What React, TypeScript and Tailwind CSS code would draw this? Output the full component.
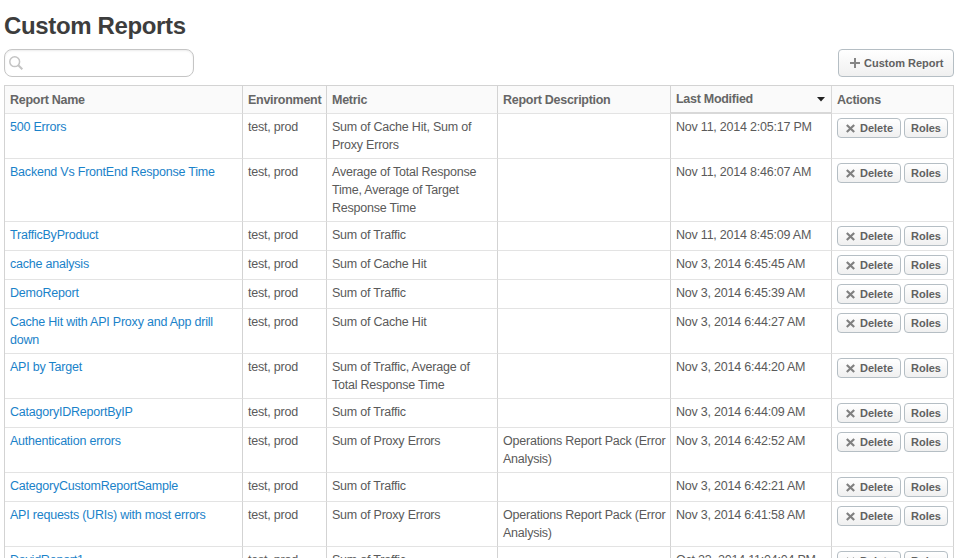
import type { ReactNode } from 'react';

type Report = { name: string[]; metric: string[]; desc?: string[]; date: string };

const reports: Report[] = [
  { name: ['500 Errors'], metric: ['Sum of Cache Hit, Sum of', 'Proxy Errors'], date: 'Nov 11, 2014 2:05:17 PM' },
  { name: ['Backend Vs FrontEnd Response Time'], metric: ['Average of Total Response', 'Time, Average of Target', 'Response Time'], date: 'Nov 11, 2014 8:46:07 AM' },
  { name: ['TrafficByProduct'], metric: ['Sum of Traffic'], date: 'Nov 11, 2014 8:45:09 AM' },
  { name: ['cache analysis'], metric: ['Sum of Cache Hit'], date: 'Nov 3, 2014 6:45:45 AM' },
  { name: ['DemoReport'], metric: ['Sum of Traffic'], date: 'Nov 3, 2014 6:45:39 AM' },
  { name: ['Cache Hit with API Proxy and App drill', 'down'], metric: ['Sum of Cache Hit'], date: 'Nov 3, 2014 6:44:27 AM' },
  { name: ['API by Target'], metric: ['Sum of Traffic, Average of', 'Total Response Time'], date: 'Nov 3, 2014 6:44:20 AM' },
  { name: ['CatagoryIDReportByIP'], metric: ['Sum of Traffic'], date: 'Nov 3, 2014 6:44:09 AM' },
  { name: ['Authentication errors'], metric: ['Sum of Proxy Errors'], desc: ['Operations Report Pack (Error', 'Analysis)'], date: 'Nov 3, 2014 6:42:52 AM' },
  { name: ['CategoryCustomReportSample'], metric: ['Sum of Traffic'], date: 'Nov 3, 2014 6:42:21 AM' },
  { name: ['API requests (URIs) with most errors'], metric: ['Sum of Proxy Errors'], desc: ['Operations Report Pack (Error', 'Analysis)'], date: 'Nov 3, 2014 6:41:58 AM' },
  { name: ['DavidReport1'], metric: ['Sum of Traffic'], date: 'Oct 23, 2014 11:04:04 PM' },
];

const columns = 'grid grid-cols-[238px_84px_171px_173px_161px_122px]';

function Lines({ lines }: { lines: string[] }) {
  return (
    <>
      {lines.map((line) => (
        <div key={line}>{line}</div>
      ))}
    </>
  );
}

function Cell({ children, className = '' }: { children?: ReactNode; className?: string }) {
  return (
    <div className={`whitespace-nowrap border-r border-b border-r-[#d3d3d3] border-b-[#e3e3e3] py-1 pl-[5px] ${className}`}>
      {children}
    </div>
  );
}

function HeadCell({ children }: { children: ReactNode }) {
  return (
    <div className="h-7 whitespace-nowrap border-r border-b border-r-[#d3d3d3] border-b-[#e3e3e3] pt-[5px] pl-[5px]">
      {children}
    </div>
  );
}

const button =
  'flex items-center rounded-[4px] border border-[#b5bec4] bg-linear-to-b from-white to-[#f0f0f0] text-[11px] font-bold tracking-normal whitespace-nowrap text-[#616161]';

function Row({ report }: { report: Report }) {
  return (
    <div className={columns}>
      <Cell className="text-[#1a82c9]">
        <Lines lines={report.name} />
      </Cell>
      <Cell>test, prod</Cell>
      <Cell>
        <Lines lines={report.metric} />
      </Cell>
      <Cell>{report.desc && <Lines lines={report.desc} />}</Cell>
      <Cell>{report.date}</Cell>
      <Cell>
        <div className="flex gap-[3px]">
          <button className={`${button} h-5 w-16 pl-2`}>
            <svg className="mr-[5px] size-[9px]" viewBox="0 0 9 9" stroke="#808080" strokeWidth="2.2">
              <path d="M0.8 1L8.2 8M8.2 1L0.8 8" />
            </svg>
            Delete
          </button>
          <button className={`${button} h-5 w-11 justify-center`}>Roles</button>
        </div>
      </Cell>
    </div>
  );
}

export default function App() {
  return (
    <main className="h-[558px] w-[957px] overflow-hidden bg-white pl-1 font-['Liberation_Sans',Arial,sans-serif] text-[12.5px] leading-[18px] tracking-[-0.22px] text-[#5a5a5a]">
      <h1 className="pt-[10px] text-[24px] leading-[32px] font-bold tracking-[-0.36px] whitespace-nowrap text-[#3d3d3d]">Custom Reports</h1>
      <div className="mt-[7px] flex w-[950px] justify-between">
        <div className="flex h-7 w-[190px] items-center rounded-lg border border-[#c5c5c5] pl-1 shadow-[inset_0_1px_2px_rgba(0,0,0,0.08)]">
          <svg className="size-[14px]" viewBox="0 0 14 14" fill="none" stroke="#c4c4c4">
            <circle cx="5.7" cy="5.7" r="4.9" strokeWidth="1.5" />
            <path d="M9.3 9.3L13.3 13.3" strokeWidth="2" />
          </svg>
        </div>
        <button className={`${button} h-7 w-[116px] pl-[11px]`}>
          <svg className="mr-[3px] size-[11px]" viewBox="0 0 11 11" stroke="#858585" strokeWidth="2">
            <path d="M5 0V10M0 5H10" />
          </svg>
          Custom Report
        </button>
      </div>
      <div className="mt-2 w-[950px] border-t border-l border-[#d3d3d3]">
        <div className={`${columns} bg-[#fafafa] font-bold tracking-[-0.28px] text-[#666]`}>
          <HeadCell>Report Name</HeadCell>
          <HeadCell>Environment</HeadCell>
          <HeadCell>Metric</HeadCell>
          <HeadCell>Report Description</HeadCell>
          <div className="flex h-7 justify-between border-r border-b-2 border-[#d8d8d8] pt-1 pr-[6px] pl-[5px]">
            <span className="whitespace-nowrap">Last Modified</span>
            <svg className="mt-[7px] h-[5px] w-2" viewBox="0 0 8 5" fill="#222">
              <path d="M0 0H8L4 4.5Z" />
            </svg>
          </div>
          <HeadCell>Actions</HeadCell>
        </div>
        {reports.map((report) => (
          <Row key={report.name[0]} report={report} />
        ))}
      </div>
    </main>
  );
}
